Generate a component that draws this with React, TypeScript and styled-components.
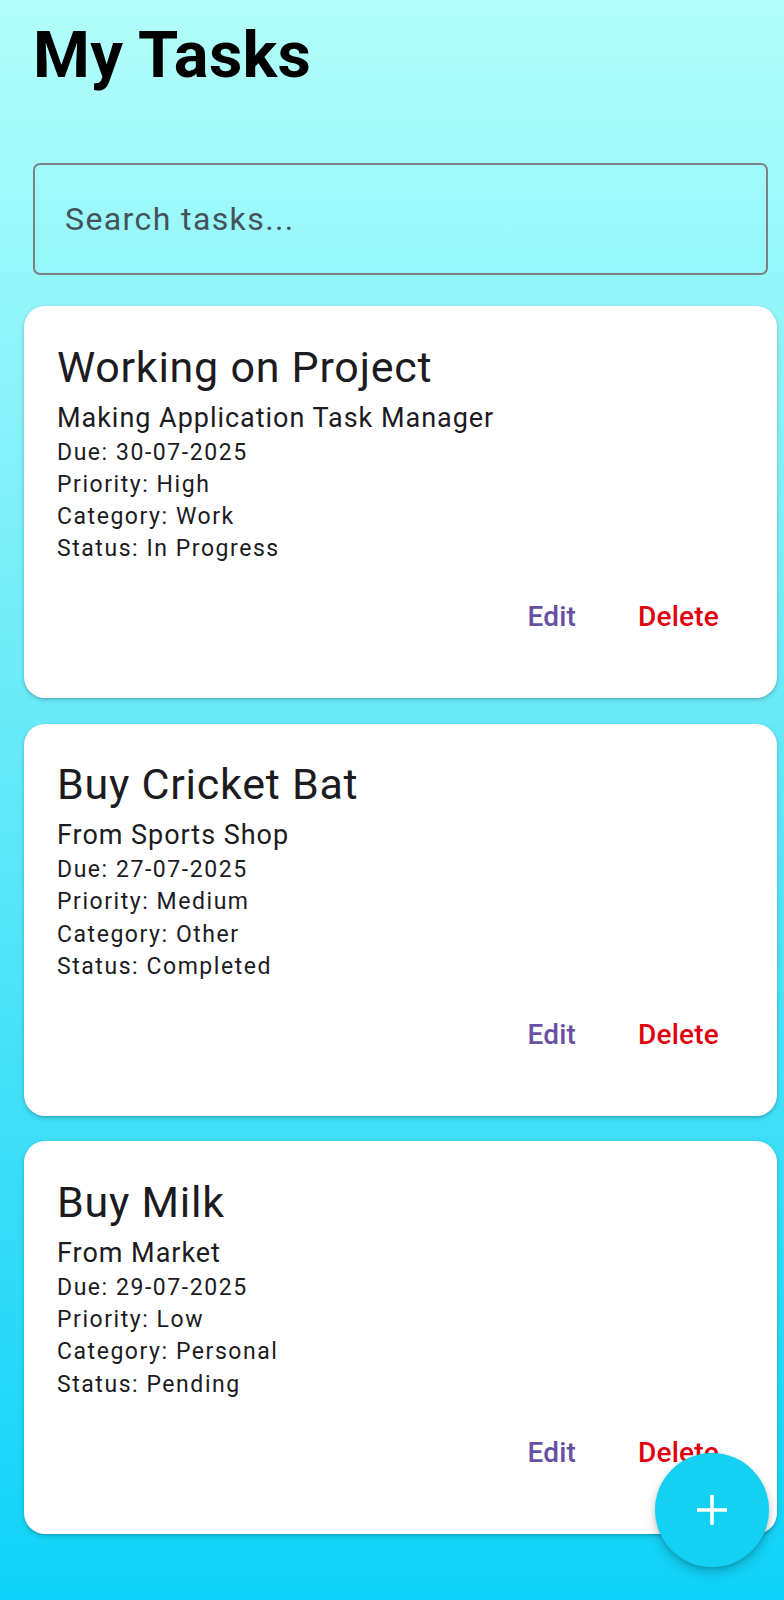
import React from "react";
import styled, { createGlobalStyle } from "styled-components";

const GlobalStyle = createGlobalStyle`
  html, body {
    margin: 0;
    padding: 0;
  }
  body {
    font-family: Roboto, "Noto Sans", Arial, sans-serif;
    background: #0ed2f7;
  }
`;

const Page = styled.div`
  position: relative;
  min-height: 1600px;
  box-sizing: border-box;
  padding: 18px 7px 40px 24px;
  background: linear-gradient(to bottom, #b2fefa 0%, #0ed2f7 100%);
  display: flex;
  flex-direction: column;
`;

const Heading = styled.h1`
  margin: 0 0 70px 9px;
  font-family: Roboto, Arial, sans-serif;
  font-weight: 700;
  font-size: 65px;
  line-height: 75px;
  color: #000;
  letter-spacing: 0.3px;
`;

const SearchInput = styled.input`
  box-sizing: border-box;
  margin: 0 9px 31px 9px;
  height: 112px;
  padding: 0 30px;
  border: 2px solid #7b8184;
  border-radius: 7px;
  background: transparent;
  font-family: Roboto, Arial, sans-serif;
  font-size: 32px;
  letter-spacing: 1.4px;
  color: #1c1b1f;
  outline: none;
  &::placeholder {
    color: #44535b;
  }
`;

const CardList = styled.div`
  display: flex;
  flex-direction: column;
  gap: 25.5px;
`;

const Card = styled.div`
  background: #ffffff;
  border-radius: 21px;
  box-shadow: 0 2px 5px rgba(0, 0, 0, 0.18), 0 1px 2px rgba(0, 0, 0, 0.12);
  padding: 35.5px 33px 46.5px 33px;
  display: flex;
  flex-direction: column;
`;

const Title = styled.div`
  font-size: 43px;
  line-height: 50px;
  letter-spacing: 0.75px;
  color: #1c1b1f;
  margin-bottom: 8px;
`;

const Subtitle = styled.div`
  font-size: 27px;
  line-height: 37px;
  letter-spacing: 0.97px;
  color: #1c1b1f;
`;

const Detail = styled.div`
  font-size: 23px;
  line-height: 32.3px;
  letter-spacing: 1.55px;
  color: #1c1b1f;
`;

const Actions = styled.div`
  margin-top: 16px;
  display: flex;
  justify-content: flex-end;
  gap: 12px;
`;

const TextButton = styled.button<{ $tone: "primary" | "danger" }>`
  height: 70px;
  padding: 0 25px;
  border: none;
  background: transparent;
  border-radius: 35px;
  font-family: Roboto, Arial, sans-serif;
  font-weight: 500;
  font-size: 28px;
  letter-spacing: 0.2px;
  color: ${(p) => (p.$tone === "danger" ? "#e0000f" : "#6750a4")};
  cursor: pointer;
`;

const Fab = styled.button`
  position: absolute;
  right: 15px;
  bottom: 33px;
  width: 114px;
  height: 114px;
  border-radius: 50%;
  border: none;
  background: #14d0f3;
  box-shadow: 0 6px 12px rgba(0, 0, 0, 0.18), 0 2px 4px rgba(0, 0, 0, 0.14);
  display: flex;
  align-items: center;
  justify-content: center;
  padding: 0;
  cursor: pointer;
`;

type Task = {
  title: string;
  description: string;
  due: string;
  priority: string;
  category: string;
  status: string;
};

const tasks: Task[] = [
  {
    title: "Working on Project",
    description: "Making Application Task Manager",
    due: "30-07-2025",
    priority: "High",
    category: "Work",
    status: "In Progress",
  },
  {
    title: "Buy Cricket Bat",
    description: "From Sports Shop",
    due: "27-07-2025",
    priority: "Medium",
    category: "Other",
    status: "Completed",
  },
  {
    title: "Buy Milk",
    description: "From Market",
    due: "29-07-2025",
    priority: "Low",
    category: "Personal",
    status: "Pending",
  },
];

const PlusIcon = () => (
  <svg width="34" height="34" viewBox="0 0 34 34" aria-hidden="true">
    <path d="M17 2 V32 M2 17 H32" stroke="#ffffff" strokeWidth="3.5" strokeLinecap="butt" />
  </svg>
);

export default function App() {
  return (
    <>
      <GlobalStyle />
      <Page>
        <Heading>My Tasks</Heading>
        <SearchInput placeholder="Search tasks..." />
        <CardList>
          {tasks.map((t) => (
            <Card key={t.title}>
              <Title>{t.title}</Title>
              <Subtitle>{t.description}</Subtitle>
              <Detail>Due: {t.due}</Detail>
              <Detail>Priority: {t.priority}</Detail>
              <Detail>Category: {t.category}</Detail>
              <Detail>Status: {t.status}</Detail>
              <Actions>
                <TextButton $tone="primary">Edit</TextButton>
                <TextButton $tone="danger">Delete</TextButton>
              </Actions>
            </Card>
          ))}
        </CardList>
        <Fab aria-label="Add task">
          <PlusIcon />
        </Fab>
      </Page>
    </>
  );
}
